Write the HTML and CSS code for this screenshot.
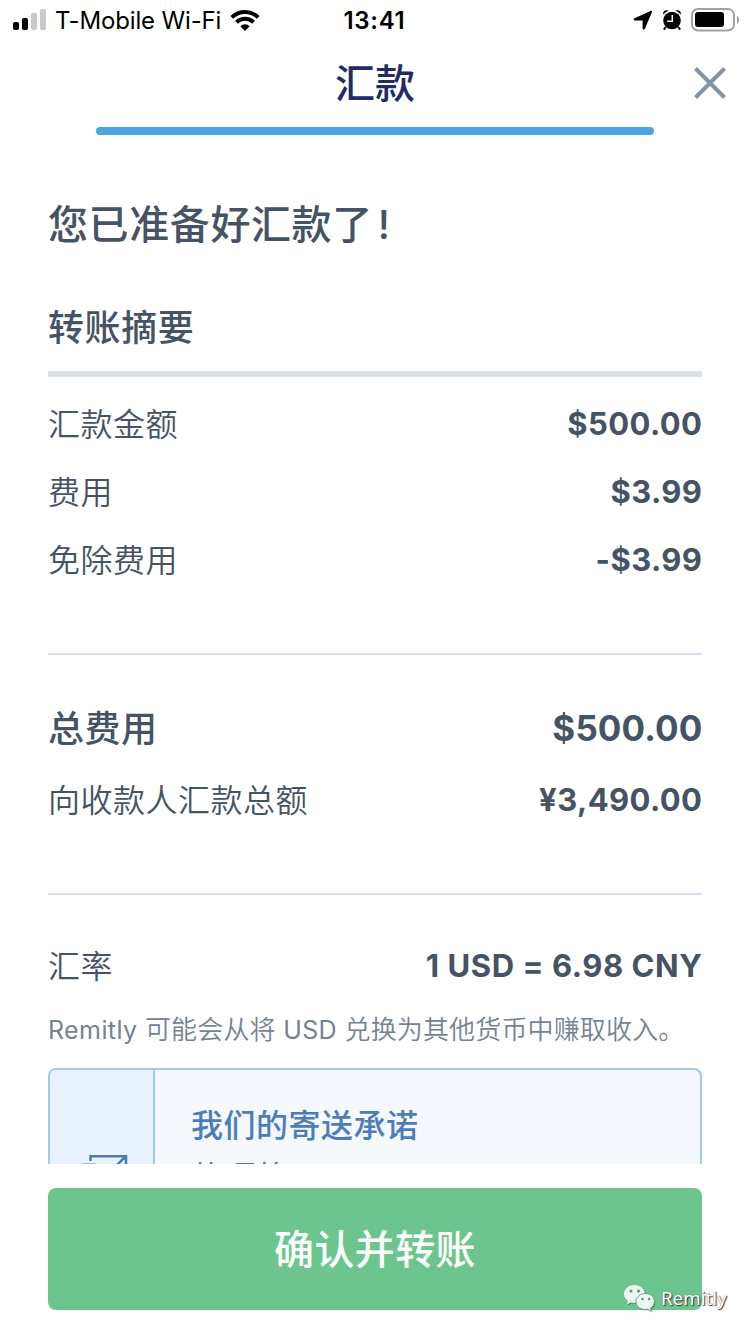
FILE: index.html
```html
<!DOCTYPE html>
<html lang="zh-CN">
<head>
<meta charset="utf-8">
<title>汇款</title>
<link rel="stylesheet" href="styles.css">
</head>
<body>
<div class="screen">
  <header class="status">
    <div class="status-left">
      <svg class="signal" width="34" height="22" viewBox="0 0 34 22"><rect x="0" y="13" width="6" height="8" rx="2"/><rect x="9" y="9" width="6" height="12" rx="2"/><g fill="#c9c9c9"><rect x="18" y="4" width="6" height="17" rx="2"/><rect x="27" y="0" width="6" height="21" rx="2"/></g></svg>
      <span class="carrier">T-Mobile Wi-Fi</span>
      <svg class="wifi" width="30" height="22" viewBox="0 0 30 22"><g fill="none" stroke="#000" stroke-width="4"><path d="M1.8 8.4a19 19 0 0 1 26.4 0"/><path d="M6.5 13.3a12.2 12.2 0 0 1 17 0"/></g><path d="M10.3 17.2a6.9 6.9 0 0 1 9.4 0L15 22Z"/></svg>
    </div>
    <time class="clock">13:41</time>
    <div class="status-right">
      <svg width="20" height="20" viewBox="0 0 20 20"><path d="M17.500.9 1.600 8.300c-1.500.7-1.200 2.300.4 2.300h7.600v7.600c0 1.700 1.700 1.900 2.400.4L18.900 2.200c.5-1-.4-1.800-1.400-1.300Z"/></svg>
      <svg class="alarm" width="20" height="22" viewBox="0 0 20 22"><circle cx="10" cy="11.500" r="8.800"/><path d="M1 5.600C.6 2.500 3.500.4 6.300 1.500ZM19 5.600C19.400 2.500 16.500.4 13.700 1.500Z"/><path d="m3.800 18-2 2.600M16.200 18l2 2.600" stroke="#000" stroke-width="2"/><path d="M10.300 6v6.300H5.200" fill="none" stroke="#fff" stroke-width="1.500"/></svg>
      <svg class="battery" width="48" height="24" viewBox="0 0 48 24"><rect x="1" y="1" width="42" height="21.500" rx="6" fill="none" stroke="#a2a2a2" stroke-width="2"/><rect x="4" y="4" width="29" height="15" rx="3"/><path d="M46 8c1.600.6 2.400 2 2.400 3.700S47.600 15 46 15.500Z" fill="#a2a2a2"/></svg>
    </div>
  </header>
  <div class="nav">
    <h1 class="nav-title">汇款</h1>
    <svg class="close" width="32" height="32" viewBox="0 0 32 32"><path d="m1.500 1.500 29 29m0-29-29 29" stroke="#8593a5" stroke-width="4"/></svg>
  </div>
  <div class="progress"></div>
  <main class="content">
    <h2 class="headline">您已准备好汇款了<span class="bang">!</span></h2>
    <h3 class="section">转账摘要</h3>
    <div class="rows fees">
      <div class="row"><span>汇款金额</span><b>$500.00</b></div>
      <div class="row"><span>费用</span><b>$3.99</b></div>
      <div class="row"><span>免除费用</span><b>-$3.99</b></div>
    </div>
    <div class="rows totals">
      <div class="row total"><span>总费用</span><b>$500.00</b></div>
      <div class="row"><span>向收款人汇款总额</span><b>¥3,490.00</b></div>
    </div>
    <div class="row rate"><span>汇率</span><b class="formula">1 USD = 6.98 CNY</b></div>
    <p class="note"><span class="latin">Remitly</span> 可能会从将 <span class="latin">USD</span> 兑换为其他货币中赚取收入。</p>
    <section class="promise">
      <div class="promise-icon">
        <svg width="60" height="40" viewBox="0 0 60 40" fill="none" stroke="#4d7db8" stroke-width="2.600"><path d="M14.500 7V2.300h35.500v30h-35.500M49.500 2.500 34 18"/><path d="M6 10h14" stroke="#a9bfdb" stroke-width="2"/></svg>
      </div>
      <div class="promise-text">
        <h4 class="promise-title">我们的寄送承诺</h4>
        <p class="promise-body">款项将于</p>
      </div>
    </section>
  </main>
  <footer class="footer">
    <button class="confirm">确认并转账</button>
    <div class="watermark">
      <svg width="34" height="30" viewBox="0 0 34 30"><g fill="#59605c" transform="translate(.8 .8)"><path d="M11.500 1C5.500 1 1 5 1 10c0 3 1.500 5.300 4 7l-1 3.500 4-2c8 1.800 14-2 14-8.500 0-5-4.500-9-10.500-9Z"/><path d="M22.500 9.500c-5.500 0-9.500 3.500-9.500 8 0 5.500 5 9 11.500 7.700l4 2-1-3c2.500-1.500 4-4 4-6.700 0-4.500-4-8-9-8Z"/></g><path d="M11.500 1C5.500 1 1 5 1 10c0 3 1.500 5.300 4 7l-1 3.500 4-2c8 1.800 14-2 14-8.500 0-5-4.500-9-10.500-9Z" fill="#edf6f0"/><path d="M22.500 9.500c-5.500 0-9.500 3.500-9.500 8 0 5.500 5 9 11.500 7.700l4 2-1-3c2.500-1.500 4-4 4-6.700 0-4.500-4-8-9-8Z" fill="#edf6f0" stroke="#65a982"/><g fill="#579770"><circle cx="8" cy="7" r="1.500"/><circle cx="15.500" cy="7" r="1.500"/><circle cx="19.500" cy="15" r="1.200"/><circle cx="26" cy="15" r="1.200"/></g></svg>
      <span>Remitly</span>
    </div>
  </footer>
</div>
</body>
</html>
```
FILE: styles.css
```css
* { box-sizing: border-box; margin: 0; padding: 0; }
body { background: #fff; font-family: Inter, "Noto Sans CJK SC", sans-serif; color: #465364; }
.screen { width: 750px; height: 1334px; overflow: hidden; display: flex; flex-direction: column; }
svg { display: block; flex: none; }
.status { height: 40px; flex: none; display: grid; grid-template-columns: 1fr auto 1fr; align-items: center; color: #000; padding: 0 12px 0 13px; }
.status-left, .status-right { display: flex; align-items: center; }
.status-right { justify-content: flex-end; }
.carrier { font-size: 24px; letter-spacing: -.15px; margin: 1px 9px 0 8px; white-space: nowrap; }
.clock { font-size: 24px; font-weight: 600; letter-spacing: .7px; margin: 1px 2px 0 0; }
.alarm { margin: 0 9px; }
.battery { margin-right: -1px; }
.nav { height: 87px; flex: none; display: grid; grid-template-columns: 1fr auto 1fr; align-items: center; padding: 0 24px; }
.nav-title { grid-column: 2; font-size: 40px; font-weight: 500; line-height: 58px; color: #232c62; }
.close { justify-self: end; margin-top: -2px; }
.progress { height: 8px; flex: none; margin: 0 96px; border-radius: 4px; background: #4ca5e0; }
.content { height: 1029px; flex: none; overflow: hidden; padding: 61px 48px 0; }
.headline { font-size: 40px; font-weight: 500; line-height: 58px; letter-spacing: .6px; }
.bang { margin-left: 5px; }
.section { font-size: 36px; font-weight: 500; line-height: 52px; letter-spacing: .6px; margin-top: 48px; height: 75px; border-bottom: 6px solid #d9e0e8; }
.row { height: 68px; display: flex; align-items: center; justify-content: space-between; font-size: 32px; }
.row span { letter-spacing: .5px; padding-bottom: 4px; font-weight: 350; }
.row b { font-weight: 700; font-size: 31px; letter-spacing: .4px; margin: -1px -.4px 0 0; }
.fees { padding-top: 13px; height: 278px; border-bottom: 2px solid #d5dfec; }
.totals { padding-top: 35px; height: 240px; border-bottom: 2px solid #d5dfec; }
.total { height: 76px; font-size: 36px; }
.total span { font-weight: 500; }
.total b { font-size: 35px; letter-spacing: .1px; margin-top: -1px; }
.row .formula { letter-spacing: .55px; }
.rate { height: 68px; margin-top: 37px; }
.note { font-size: 26px; font-weight: 350; line-height: 36px; margin-top: 12px; color: #758294; white-space: nowrap; letter-spacing: .15px; }
.latin { font-size: 25px; font-weight: 400; letter-spacing: .4px; }
.promise { display: flex; height: 240px; margin-top: 20px; border: 2px solid #9bccf0; border-radius: 8px; background: #f5f9fe; color: #4d7db8; overflow: hidden; }
.promise-icon { width: 105px; flex: none; border-right: 2px solid #9bccf0; background: #e8f3fd; padding: 84px 0 0 26px; }
.promise-text { padding: 32px 36px; }
.promise-title { font-size: 32px; font-weight: 500; line-height: 48px; letter-spacing: .5px; }
.promise-body { font-size: 32px; line-height: 48px; letter-spacing: .4px; margin-top: 4px; }
.footer { position: relative; flex: 1; padding: 24px 48px; }
.confirm { display: block; width: 100%; height: 122px; border: 0; border-radius: 8px; background: #6dc58e; color: #fff; font: inherit; font-size: 40px; font-weight: 500; letter-spacing: .4px; padding-bottom: 4px; }
.watermark { position: absolute; left: 623px; top: 120px; display: flex; align-items: center; gap: 4px; font: 18.7px "Noto Sans", sans-serif; color: #fff; text-shadow: 1px 1px 1px #333, 0 0 1px #666; }
.watermark span { margin-top: -3px; }
```
